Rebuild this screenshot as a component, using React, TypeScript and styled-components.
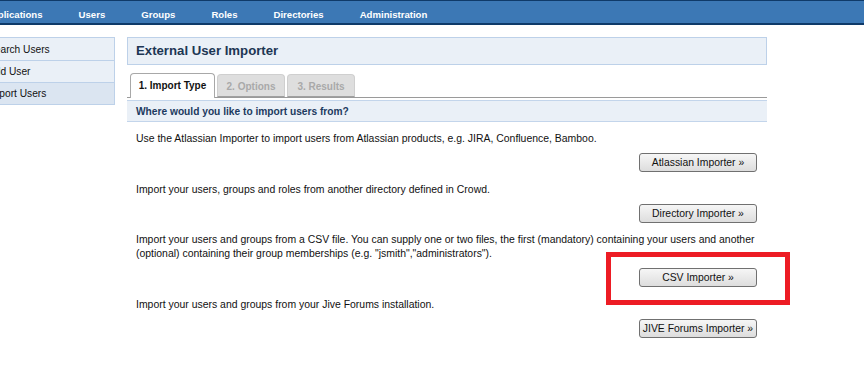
import * as React from 'react'
import styled, { createGlobalStyle } from 'styled-components'

const GlobalStyle = createGlobalStyle`
  html, body {
    margin: 0;
    padding: 0;
    background: #fff;
    overflow: hidden;
  }
  body {
    font-family: "Liberation Sans", Arial, Helvetica, sans-serif;
    font-size: 10.45px;
    color: #000;
  }
`

const navItems = ['Applications', 'Users', 'Groups', 'Roles', 'Directories', 'Administration']

const sideItems = [
  { label: 'Search Users' },
  { label: 'Add User' },
  { label: 'Import Users', active: true },
]

const tabs = [
  { label: '1. Import Type', active: true },
  { label: '2. Options' },
  { label: '3. Results' },
]

const importers = [
  {
    text: 'Use the Atlassian Importer to import users from Atlassian products, e.g. JIRA, Confluence, Bamboo.',
    button: 'Atlassian Importer \u00bb',
  },
  {
    text: 'Import your users, groups and roles from another directory defined in Crowd.',
    button: 'Directory Importer \u00bb',
  },
  {
    text:
      'Import your users and groups from a CSV file. You can supply one or two files, the first (mandatory) containing your users and another (optional) containing their group memberships (e.g. "jsmith","administrators").',
    button: 'CSV Importer \u00bb',
    highlight: true,
  },
  {
    text: 'Import your users and groups from your Jive Forums installation.',
    button: 'JIVE Forums Importer \u00bb',
  },
]

export default function App() {
  return (
    <Page>
      <GlobalStyle />
      <NavBar>
        <NavList>
          {navItems.map((n) => (
            <NavItem key={n}>{n}</NavItem>
          ))}
        </NavList>
      </NavBar>
      <Body>
        <Sidebar>
          {sideItems.map((s) => (
            <SideItem key={s.label} active={!!s.active}>
              {s.label}
            </SideItem>
          ))}
        </Sidebar>
        <Main>
          <TitleBox>External User Importer</TitleBox>
          <TabRow>
            {tabs.map((t) => (
              <Tab key={t.label} active={!!t.active}>
                {t.label}
              </Tab>
            ))}
          </TabRow>
          <SectionHeader>Where would you like to import users from?</SectionHeader>
          <Content>
            {importers.map((imp) => (
              <Block key={imp.button}>
                <Para>{imp.text}</Para>
                <ButtonRow>
                  <ButtonWrap>
                    <Button type="button">{imp.button}</Button>
                    {imp.highlight && <Highlight />}
                  </ButtonWrap>
                </ButtonRow>
              </Block>
            ))}
          </Content>
        </Main>
      </Body>
    </Page>
  )
}

const Page = styled.div`
  width: 864px;
  height: 389px;
  overflow: hidden;
`
const NavBar = styled.div`
  height: 22px;
  background: #3c78b5;
  border-top: 1px solid #0f3a69;
  border-bottom: 2px solid #0f3a69;
`
const NavList = styled.div`
  display: flex;
  margin-left: -33px;
`
const NavItem = styled.div`
  padding: 5px 18px 0;
  line-height: 17px;
  font-size: 9.6px;
  font-weight: bold;
  color: #fff;
  white-space: nowrap;
`
const Body = styled.div`
  display: flex;
  align-items: flex-start;
  padding-top: 12px;
  margin-left: -22px;
`
const Sidebar = styled.div`
  width: 135px;
  flex: none;
  padding-top: 1px;
  background: #eaf0f7;
  border: 1px solid #bdd1e9;
`
const SideItem = styled.div<{ active: boolean }>`
  height: 21px;
  line-height: 21px;
  padding-left: 9px;
  font-size: 10.2px;
  color: #111;
  background: ${(p) => (p.active ? '#dbe5f1' : 'transparent')};
  & + & {
    border-top: 1px solid #bdd1e9;
  }
`
const Main = styled.div`
  width: 640px;
  margin-left: 12px;
  flex: none;
`
const TitleBox = styled.div`
  height: 26px;
  line-height: 26px;
  padding-left: 8px;
  background: #eaf0f7;
  border: 1px solid #bdd1e9;
  font-size: 13.2px;
  font-weight: bold;
  color: #1d3654;
`
const TabRow = styled.div`
  display: flex;
  align-items: flex-end;
  gap: 2px;
  height: 24px;
  margin-top: 8px;
  padding-left: 3px;
  border-bottom: 1px solid #9a9a9a;
`
const Tab = styled.div<{ active: boolean }>`
  width: ${(p) => (p.active ? 85 : 68)}px;
  box-sizing: border-box;
  height: ${(p) => (p.active ? 25 : 23)}px;
  margin-bottom: ${(p) => (p.active ? -1 : 0)}px;
  line-height: 23px;
  text-align: center;
  font-size: 10px;
  font-weight: bold;
  border: 1px solid ${(p) => (p.active ? '#a8a8a8' : '#cfcfcf')};
  border-bottom: ${(p) => (p.active ? 'none' : '1px solid #a0a0a0')};
  border-radius: 4px 4px 0 0;
  background: ${(p) => (p.active ? '#fff' : '#dedede')};
  color: ${(p) => (p.active ? '#111' : '#a9a9a9')};
`
const SectionHeader = styled.div`
  margin-top: 2px;
  height: 20px;
  line-height: 21px;
  padding-left: 9px;
  background: #eaf0f7;
  border-top: 1px solid #c3d5eb;
  border-bottom: 1px solid #c3d5eb;
  font-size: 10.2px;
  font-weight: bold;
  color: #1c3a60;
`
const Content = styled.div`
  padding: 9px 8px 0 9px;
`
const Block = styled.div`
  margin-bottom: 9.5px;
`
const Para = styled.div`
  padding-top: 1px;
  line-height: 14px;
  color: #111;
`
const ButtonRow = styled.div`
  display: flex;
  justify-content: flex-end;
  margin-top: 7px;
  padding-right: 2px;
`
const ButtonWrap = styled.div`
  position: relative;
`
const Button = styled.button`
  display: block;
  width: 118px;
  height: 19px;
  padding: 0;
  font-family: "Liberation Sans", Arial, sans-serif;
  font-size: 10.4px;
  color: #111;
  background: linear-gradient(#f6f6f6, #dddddd);
  border: 1px solid #707070;
  border-radius: 3px;
  white-space: nowrap;
`
const Highlight = styled.div`
  position: absolute;
  top: -16px;
  bottom: -18px;
  left: -33px;
  right: -33px;
  border: 5px solid #ed1c24;
  pointer-events: none;
`
